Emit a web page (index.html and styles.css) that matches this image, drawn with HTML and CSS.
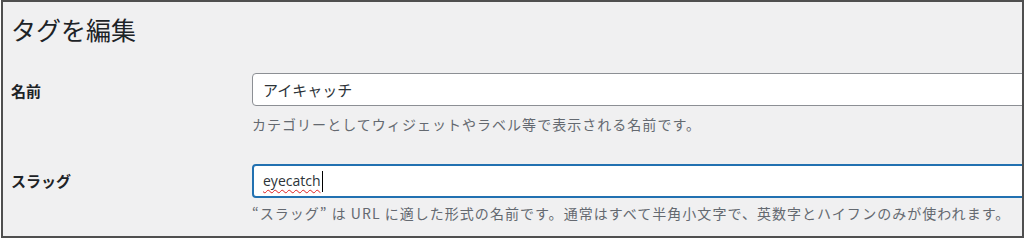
FILE: index.html
```html
<!DOCTYPE html>
<html lang="ja">
<head>
<meta charset="utf-8">
<link rel="stylesheet" href="styles.css">
</head>
<body>
<div class="frame">
  <h1 class="title">タグを編集</h1>
  <div class="row row-name">
    <div class="label">名前</div>
    <div class="field">
      <div class="input">アイキャッチ</div>
      <p class="desc">カテゴリーとしてウィジェットやラベル等で表示される名前です。</p>
    </div>
  </div>
  <div class="row row-slug">
    <div class="label label-slug">スラッグ</div>
    <div class="field">
      <div class="input focused"><span class="spell">eyecatch</span><span class="caret"></span></div>
      <p class="desc desc-slug">“スラッグ” は URL に適した形式の名前です。通常はすべて半角小文字で、英数字とハイフンのみが使われます。</p>
    </div>
  </div>
</div>
</body>
</html>
```
FILE: styles.css
```css
html, body {
  margin: 0;
  padding: 0;
  background: #ffffff;
}
body {
  font-family: "Noto Sans CJK JP", "Noto Sans", sans-serif;
  color: #1d2327;
}
.frame {
  box-sizing: border-box;
  width: 1023px;
  height: 238px;
  margin-left: 1px;
  border: 2px solid #4f4f4f;
  background: #f0f0f1;
  overflow: hidden;
  padding-left: 8px;
}
.title {
  margin: 12px 0 0 0;
  font-size: 25px;
  font-weight: 400;
  line-height: 30px;
  letter-spacing: 0;
}
.row {
  display: flex;
  align-items: flex-start;
}
.row-name {
  margin-top: 29px;
}
.row-slug {
  margin-top: 30px;
}
.label {
  width: 241px;
  flex: 0 0 241px;
  font-size: 15px;
  font-weight: 700;
  line-height: 20px;
  padding-top: 8px;
}
.label-slug {
  padding-top: 7px;
}
.field {
  flex: 0 0 800px;
}
.input {
  box-sizing: border-box;
  height: 33px;
  border: 1px solid #8c8f94;
  border-radius: 4px;
  background: #fff;
  padding: 0 10px;
  font-size: 15px;
  line-height: 30px;
  color: #2c3338;
  display: flex;
  align-items: center;
}
.input.focused {
  height: 34px;
  border: 2px solid #2271b1;
  padding: 0 9px;
  font-family: "Open Sans", "Noto Sans", sans-serif;
  font-size: 14px;
}
.spell {
  text-decoration: underline wavy #e02020;
  text-decoration-thickness: 1px;
  text-underline-offset: 3px;
}
.caret {
  display: inline-block;
  width: 1px;
  height: 21px;
  background: #000;
  margin-left: 1px;
}
.desc {
  margin: 8px 0 0 0;
  font-size: 14px;
  line-height: 20px;
  letter-spacing: 1.03px;
  color: #646970;
}
.desc-slug {
  margin-top: 5px;
}
```
